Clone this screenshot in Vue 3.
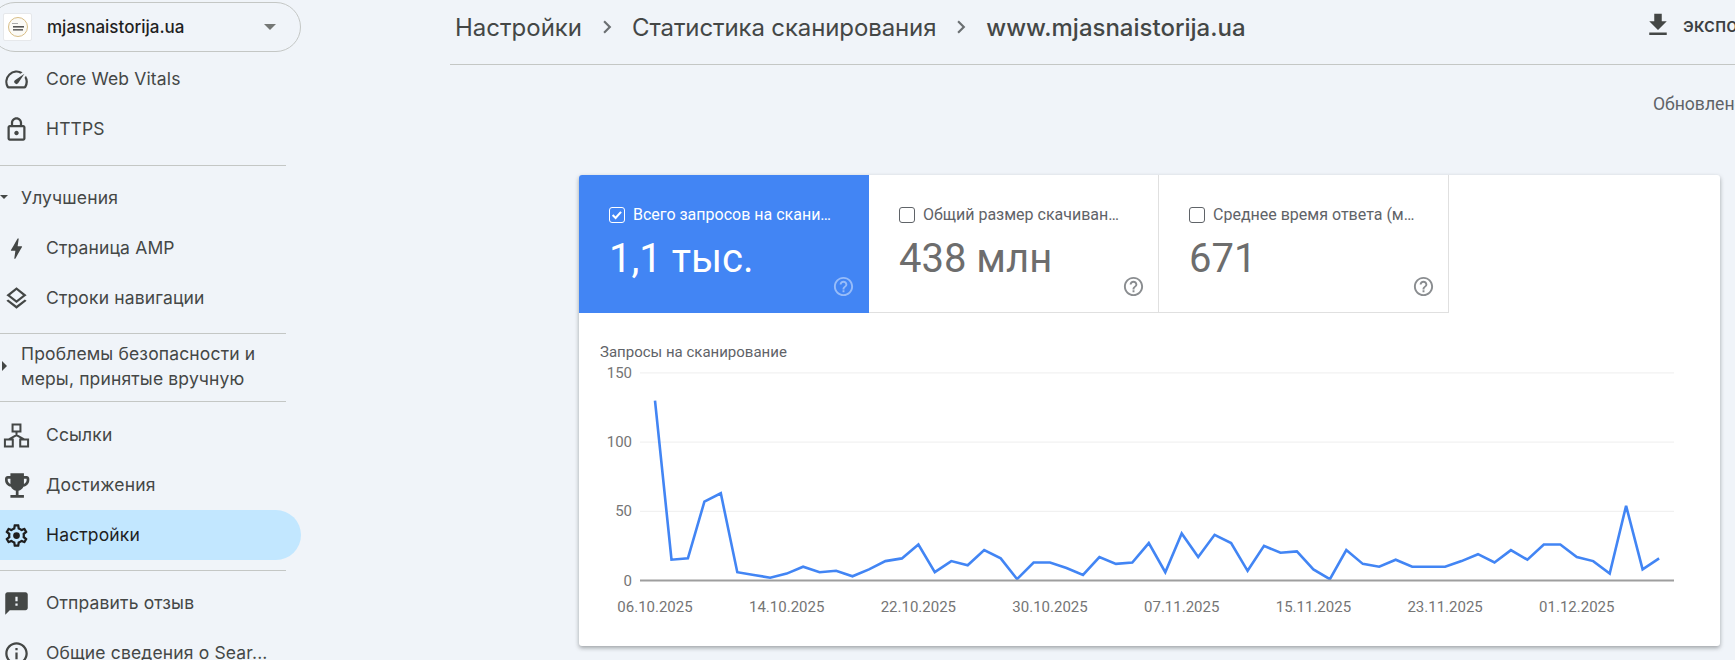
<script setup>
const SPEED = 'M20.38 8.57l-1.23 1.85a8 8 0 0 1-.22 7.58H5.07A8 8 0 0 1 15.58 6.85l1.85-1.23A10 10 0 0 0 3.35 19a2 2 0 0 0 1.72 1h13.85a2 2 0 0 0 1.74-1 10 10 0 0 0-.27-10.44zm-9.79 6.84a2 2 0 0 0 2.83 0l5.66-8.49-8.49 5.66a2 2 0 0 0 0 2.83z'
const LOCK = 'M18 8h-1V6c0-2.76-2.24-5-5-5S7 3.24 7 6v2H6c-1.1 0-2 .9-2 2v10c0 1.1.9 2 2 2h12c1.1 0 2-.9 2-2V10c0-1.1-.9-2-2-2zM9 6c0-1.66 1.34-3 3-3s3 1.34 3 3v2H9V6zm9 14H6V10h12v10zm-6-3c1.1 0 2-.9 2-2s-.9-2-2-2-2 .9-2 2 .9 2 2 2z'
const BOLT = 'M11 21h-1l1-7H7.5c-.58 0-.57-.32-.38-.66.19-.34.05-.08.07-.12C8.48 10.94 10.42 7.54 13 3h1l-1 7h3.5c.49 0 .56.33.47.51l-.07.15C12.96 17.55 11 21 11 21z'
const LAYERS = 'M11.99 18.54l-7.37-5.73L3 14.07l9 7 9-7-1.63-1.27-7.38 5.74zM12 16l7.36-5.73L21 9l-9-7-9 7 1.63 1.27L12 16zm0-11.47L17.74 9 12 13.47 6.26 9 12 4.53z'
const TREE = 'M8.5 2.2h7v6.3h-7zM1.7 15.5h7v6.3h-7zM15.3 15.5h7v6.3h-7zM12 8.5v3.2M12 11.7 5.2 15.5M12 11.7l6.8 3.8'
const TROPHY = 'M19 5h-2V3H7v2H5c-1.1 0-2 .9-2 2v1c0 2.55 1.92 4.63 4.39 4.94.63 1.5 1.98 2.63 3.61 2.96V19H7v2h10v-2h-4v-3.1c1.63-.33 2.98-1.46 3.61-2.96C19.08 12.63 21 10.55 21 8V7c0-1.1-.9-2-2-2zM5 8V7h2v3.82C5.84 10.4 5 9.3 5 8zm14 0c0 1.3-.84 2.4-2 2.82V7h2v1z'
const GEAR = 'M19.43 12.98c.04-.32.07-.64.07-.98 0-.34-.03-.66-.07-.98l2.11-1.65c.19-.15.24-.42.12-.64l-2-3.46c-.09-.16-.26-.25-.44-.25-.06 0-.12.01-.17.03l-2.49 1c-.52-.4-1.08-.73-1.69-.98l-.38-2.65C14.46 2.18 14.25 2 14 2h-4c-.25 0-.46.18-.49.42l-.38 2.65c-.61.25-1.17.59-1.69.98l-2.49-1c-.06-.02-.12-.03-.18-.03-.17 0-.34.09-.43.25l-2 3.46c-.13.22-.07.49.12.64l2.11 1.65c-.04.32-.07.65-.07.98 0 .33.03.66.07.98l-2.11 1.65c-.19.15-.24.42-.12.64l2 3.46c.09.16.26.25.44.25.06 0 .12-.01.17-.03l2.49-1c.52.4 1.08.73 1.69.98l.38 2.65c.03.24.24.42.49.42h4c.25 0 .46-.18.49-.42l.38-2.65c.61-.25 1.17-.59 1.69-.98l2.49 1c.06.02.12.03.18.03.17 0 .34-.09.43-.25l2-3.46c.12-.22.07-.49-.12-.64l-2.11-1.65zm-1.98-1.71c.04.31.05.52.05.73 0 .21-.02.43-.05.73l-.14 1.13.89.7 1.08.84-.7 1.21-1.27-.51-1.04-.42-.9.68c-.43.32-.84.56-1.25.73l-1.06.43-.16 1.13-.2 1.35h-1.4l-.19-1.35-.16-1.13-1.06-.43c-.43-.18-.83-.41-1.23-.71l-.91-.7-1.06.43-1.27.51-.7-1.21 1.08-.84.89-.7-.14-1.13c-.03-.31-.05-.54-.05-.74s.02-.43.05-.73l.14-1.13-.89-.7-1.08-.84.7-1.21 1.27.51 1.04.42.9-.68c.43-.32.84-.56 1.25-.73l1.06-.43.16-1.13.2-1.35h1.39l.19 1.35.16 1.13 1.06.43c.43.18.83.41 1.23.71l.91.7 1.06-.43 1.27-.51.7 1.21-1.07.85-.89.7.14 1.13zM12 9a3 3 0 1 0 0 6 3 3 0 0 0 0-6z'
const FEEDBACK = 'M20 2H4c-1.1 0-1.99.9-1.99 2L2 22l4-4h14c1.1 0 2-.9 2-2V4c0-1.1-.9-2-2-2zm-7 12h-2v-2h2v2zm0-4h-2V6h2v4z'
const INFO = 'M11 7h2v2h-2zm0 4h2v6h-2zm1-9C6.48 2 2 6.48 2 12s4.48 10 10 10 10-4.48 10-10S17.52 2 12 2zm0 18c-4.41 0-8-3.59-8-8s3.59-8 8-8 8 3.59 8 8-3.59 8-8 8z'
const DOWNLOAD = 'M19 9h-4V3H9v6H5l7 7 7-7zM5 18v2h14v-2H5z'
const HELP = 'M11 18h2v-2h-2v2zm1-16C6.48 2 2 6.48 2 12s4.48 10 10 10 10-4.48 10-10S17.52 2 12 2zm0 18c-4.41 0-8-3.59-8-8s3.59-8 8-8 8 3.59 8 8-3.59 8-8 8zm0-14c-2.21 0-4 1.79-4 4h2c0-1.1.9-2 2-2s2 .9 2 2c0 2-3 1.75-3 5h2c0-2.25 3-2.5 3-5 0-2.21-1.79-4-4-4z'

const tabs = [
  { label: 'Всего запросов на сканирование', value: '1,1 тыс.', active: true },
  { label: 'Общий размер скачивания (в байтах)', value: '438 млн', active: false },
  { label: 'Среднее время ответа (мс)', value: '671', active: false },
]

const requests = [
  130, 15, 16, 57, 63, 6, 4, 2, 5, 10, 6, 7, 3, 8, 14, 16, 26, 6, 14, 11, 22, 16, 1, 13, 13, 9, 4, 17, 12, 13, 27,
  6, 34, 17, 33, 27, 7, 25, 20, 21, 8, 1, 22, 12, 10, 15, 10, 10, 10, 14, 19, 13, 22, 15, 26, 26, 17, 14, 5, 54, 8, 16,
]

// chart geometry, relative to the svg box
const PLOT_LEFT = 61
const PLOT_RIGHT = 1095
const BASE_Y = 255.5
const UNIT = 1.384
const FIRST_X = 76
const STEP = 16.46

const yTicks = [150, 100, 50, 0].map((v) => ({ v, y: BASE_Y - v * UNIT }))
const xLabels = [
  '06.10.2025', '14.10.2025', '22.10.2025', '30.10.2025',
  '07.11.2025', '15.11.2025', '23.11.2025', '01.12.2025',
].map((text, i) => ({ text, x: FIRST_X + i * 8 * STEP }))

const linePoints = requests
  .map((v, i) => `${(FIRST_X + i * STEP).toFixed(1)},${(BASE_Y - v * UNIT).toFixed(1)}`)
  .join(' ')
</script>

<template>
  <div class="page">
    <aside class="sidebar">
      <div class="property">
        <span class="logo">
          <svg width="22" height="22" viewBox="0 0 22 22">
            <circle cx="11" cy="11" r="9.5" fill="#fbfaf6" stroke="#d8bd85" stroke-width="1" />
            <rect x="5" y="7" width="6" height="1" fill="#aaa" />
            <rect x="6" y="10" width="11" height="1.6" fill="#555" />
            <rect x="6" y="13" width="10" height="1.6" fill="#666" />
          </svg>
        </span>
        <span class="property-name">mjasnaistorija.ua</span>
        <span class="property-caret"></span>
      </div>

      <a class="nav-item">
        <svg class="nav-icon" viewBox="0 0 24 24"><path :d="SPEED" /></svg><span>Core Web Vitals</span>
      </a>
      <a class="nav-item">
        <svg class="nav-icon" viewBox="0 0 24 24"><path :d="LOCK" /></svg><span>HTTPS</span>
      </a>

      <hr class="divider first" />

      <div class="group-title">
        <span class="caret-box"><span class="caret-down"></span></span>
        <span>Улучшения</span>
      </div>
      <a class="nav-item">
        <svg class="nav-icon" viewBox="0 0 24 24"><path :d="BOLT" /></svg><span>Страница AMP</span>
      </a>
      <a class="nav-item">
        <svg class="nav-icon" viewBox="0 0 24 24"><path :d="LAYERS" /></svg><span>Строки навигации</span>
      </a>

      <hr class="divider second" />

      <div class="group-title two-lines">
        <span class="caret-box"><span class="caret-right"></span></span>
        <span>Проблемы безопасности и<br />меры, принятые вручную</span>
      </div>

      <hr class="divider third" />

      <a class="nav-item">
        <svg class="nav-icon outline" viewBox="0 0 24 24"><path :d="TREE" /></svg><span>Ссылки</span>
      </a>
      <a class="nav-item">
        <svg class="nav-icon" viewBox="1.5 2 20 20"><path :d="TROPHY" /></svg><span>Достижения</span>
      </a>
      <a class="nav-item selected">
        <svg class="nav-icon" viewBox="0 0 24 24"><path :d="GEAR" /></svg><span>Настройки</span>
      </a>

      <hr class="divider fourth" />

      <a class="nav-item">
        <svg class="nav-icon" viewBox="0 0 24 24"><path :d="FEEDBACK" /></svg><span>Отправить отзыв</span>
      </a>
      <a class="nav-item">
        <svg class="nav-icon" viewBox="0 0 24 24"><path :d="INFO" /></svg><span>Общие сведения о Sear...</span>
      </a>
    </aside>

    <main class="main">
      <header class="topbar">
        <div class="crumbs">
          <span>Настройки</span>
          <svg class="chevron" viewBox="0 0 24 24"><path d="M8.6 16.6 13.2 12 8.6 7.4 10 6l6 6-6 6z" /></svg>
          <span class="middle">Статистика сканирования</span>
          <svg class="chevron" viewBox="0 0 24 24"><path d="M8.6 16.6 13.2 12 8.6 7.4 10 6l6 6-6 6z" /></svg>
          <span class="current">www.mjasnaistorija.ua</span>
        </div>
        <div class="export">
          <svg class="export-icon" viewBox="0 0 24 24"><path :d="DOWNLOAD" /></svg>
          <span>экспортировать</span>
        </div>
      </header>

      <div class="updated">Обновлено</div>

      <section class="card">
        <div class="tabs">
          <div v-for="tab in tabs" :key="tab.label" class="tab" :class="{ active: tab.active }">
            <div class="tab-head">
              <span class="checkbox">
                <svg v-if="tab.active" viewBox="0 0 16 16"><path d="M3 8 6.4 11.3 12.6 4.4" /></svg>
              </span>
              <span class="tab-label">{{ tab.label }}</span>
            </div>
            <div class="tab-value">{{ tab.value }}</div>
            <svg class="help" viewBox="0 0 24 24"><path :d="HELP" /></svg>
          </div>
        </div>

        <div class="chart">
          <div class="chart-title">Запросы на сканирование</div>
          <svg class="chart-svg" width="1140" height="300">
            <g v-for="t in yTicks" :key="t.v">
              <line v-if="t.v > 0" :x1="PLOT_LEFT" :x2="PLOT_RIGHT" :y1="t.y" :y2="t.y" class="grid" />
              <text class="y-label" :x="53" :y="t.y + 5">{{ t.v }}</text>
            </g>
            <polyline class="series" :points="linePoints" />
            <line :x1="PLOT_LEFT" :x2="PLOT_RIGHT" :y1="BASE_Y" :y2="BASE_Y" class="axis" />
            <text v-for="l in xLabels" :key="l.text" class="x-label" :x="l.x" y="287">{{ l.text }}</text>
          </svg>
        </div>
      </section>
    </main>
  </div>
</template>

<style>
html, body {
  margin: 0;
  background: #f0f4f9;
}
</style>

<style scoped>
.page {
  width: 1735px;
  height: 660px;
  display: flex;
  overflow: hidden;
  background: #f0f4f9;
  font-family: Roboto, "Liberation Sans", sans-serif;
}

.sidebar {
  width: 301px;
  flex: none;
  padding-top: 2px;
  font-family: Inter, Roboto, sans-serif;
  font-size: 17.5px;
  letter-spacing: 0.15px;
  color: #444746;
}

.property {
  height: 50px;
  box-sizing: border-box;
  margin-left: -10px;
  margin-bottom: 2px;
  display: flex;
  align-items: center;
  padding-left: 12px;
  border: 1px solid #c4c7c5;
  border-radius: 25px;
  color: #1f1f1f;
  font-size: 17px;
  letter-spacing: 0;
}

.logo {
  width: 29px;
  height: 28px;
  display: flex;
  align-items: center;
  justify-content: center;
  background: #fff;
  border: 1px solid #e6e8eb;
  border-radius: 2px;
  box-sizing: border-box;
  flex: none;
}

.property-name {
  margin-left: 15px;
  font-weight: 500;
  flex: 1;
}

.property-caret {
  width: 0;
  height: 0;
  margin-right: 24px;
  border-left: 6.5px solid transparent;
  border-right: 6.5px solid transparent;
  border-top: 6.5px solid #747775;
}

.nav-item {
  height: 50px;
  display: flex;
  align-items: center;
  border-radius: 0 25px 25px 0;
  white-space: nowrap;
}

.nav-item span {
  padding-bottom: 2px;
}

.nav-item.selected {
  background: #c2e7ff;
  color: #1f1f1f;
}

.nav-icon {
  width: 27px;
  height: 27px;
  margin-left: 3px;
  margin-right: 16px;
  fill: #444746;
  flex: none;
}

.nav-icon.outline {
  fill: none;
  stroke: #444746;
  stroke-width: 1.8;
}

.selected .nav-icon {
  fill: #1f1f1f;
}

.divider {
  width: 286px;
  height: 1px;
  margin: 0;
  border: none;
  background: #c4c7c5;
}

.divider.first {
  margin-top: 11px;
  margin-bottom: 7px;
}

.divider.second {
  margin-top: 10px;
}

.divider.third {
  margin-bottom: 8px;
}

.divider.fourth {
  margin-top: 10px;
  margin-bottom: 7px;
}

.group-title {
  height: 50px;
  display: flex;
  align-items: center;
  padding-bottom: 2px;
  box-sizing: border-box;
}

.group-title.two-lines {
  height: 67px;
  line-height: 25px;
  padding-bottom: 4px;
}

.caret-box {
  width: 21px;
  flex: none;
  display: flex;
  align-items: center;
}

.caret-down {
  width: 0;
  height: 0;
  border-left: 4px solid transparent;
  border-right: 4px solid transparent;
  border-top: 4px solid #444746;
}

.caret-right {
  width: 0;
  height: 0;
  margin-left: 2px;
  border-top: 5px solid transparent;
  border-bottom: 5px solid transparent;
  border-left: 5px solid #444746;
}

.main {
  flex: 1;
  min-width: 0;
  margin-left: 149px;
  overflow: hidden;
}

.topbar {
  height: 64px;
  display: flex;
  align-items: center;
  border-bottom: 1px solid #c4c7c5;
  padding-left: 5px;
  font-family: Inter, Roboto, sans-serif;
  white-space: nowrap;
}

.crumbs {
  display: flex;
  align-items: center;
  width: 1194px;
  flex: none;
  font-size: 24px;
  color: #444746;
  padding-bottom: 10px;
}

.crumbs .middle {
  letter-spacing: -0.12px;
}

.crumbs .current {
  font-weight: 500;
  color: #444746;
}

.chevron {
  width: 26px;
  height: 26px;
  margin: 0 12px;
  fill: #6b6f72;
}

.export {
  display: flex;
  align-items: center;
  gap: 10px;
  font-size: 19px;
  font-weight: 500;
  color: #3c4043;
  padding-bottom: 14px;
}

.export-icon {
  width: 30px;
  height: 30px;
  fill: #444746;
  margin-left: -6px;
}

.updated {
  margin-top: 29px;
  margin-left: 1203px;
  height: 21px;
  line-height: 21px;
  font-size: 17.6px;
  color: #5f6368;
  white-space: nowrap;
}

.card {
  margin-top: 60px;
  margin-left: 129px;
  width: 1141px;
  height: 471px;
  background: #fff;
  border-radius: 3px;
  box-shadow: 0 2px 4px rgba(60, 64, 67, 0.45);
}

.tabs {
  display: flex;
}

.tab {
  position: relative;
  width: 290px;
  height: 138px;
  box-sizing: border-box;
  padding: 32px 32px 0 30px;
  border-right: 1px solid #e0e0e0;
  border-bottom: 1px solid #e0e0e0;
  color: #5f6368;
}

.tab.active {
  background: #4285f4;
  border-color: #4285f4;
  border-top-left-radius: 3px;
  color: #fff;
}

.tab-head {
  display: flex;
  align-items: center;
  gap: 8px;
  height: 16px;
}

.checkbox {
  width: 16px;
  height: 16px;
  box-sizing: border-box;
  border: 1.2px solid #5f6368;
  border-radius: 3px;
  flex: none;
}

.active .checkbox {
  border-color: #fff;
}

.checkbox svg {
  display: block;
  width: 14px;
  height: 14px;
  fill: none;
  stroke: #fff;
  stroke-width: 2.4;
}

.tab-label {
  font-size: 16px;
  line-height: 20px;
  white-space: nowrap;
  overflow: hidden;
  text-overflow: ellipsis;
}

.tab-value {
  margin-top: 12px;
  font-size: 40px;
  line-height: 48px;
  color: #6d6d6d;
}

.active .tab-value {
  color: #fff;
}

.help {
  position: absolute;
  right: 13px;
  bottom: 14px;
  width: 23px;
  height: 23px;
  fill: #8a8d90;
}

.active .help {
  fill: rgba(255, 255, 255, 0.45);
}

.chart {
  padding-top: 30px;
}

.chart-title {
  margin-left: 21px;
  font-size: 15px;
  line-height: 18px;
  color: #5f6368;
}

.chart-svg {
  display: block;
  margin-top: -36px;
}

.grid {
  stroke: #eeeeee;
  stroke-width: 1;
}

.axis {
  stroke: #9e9e9e;
  stroke-width: 2;
}

.series {
  fill: none;
  stroke: #4285f4;
  stroke-width: 2.6;
  stroke-linejoin: miter;
}

.y-label {
  font-size: 15px;
  fill: #757575;
  text-anchor: end;
}

.x-label {
  font-size: 15px;
  fill: #757575;
  text-anchor: middle;
}
</style>
